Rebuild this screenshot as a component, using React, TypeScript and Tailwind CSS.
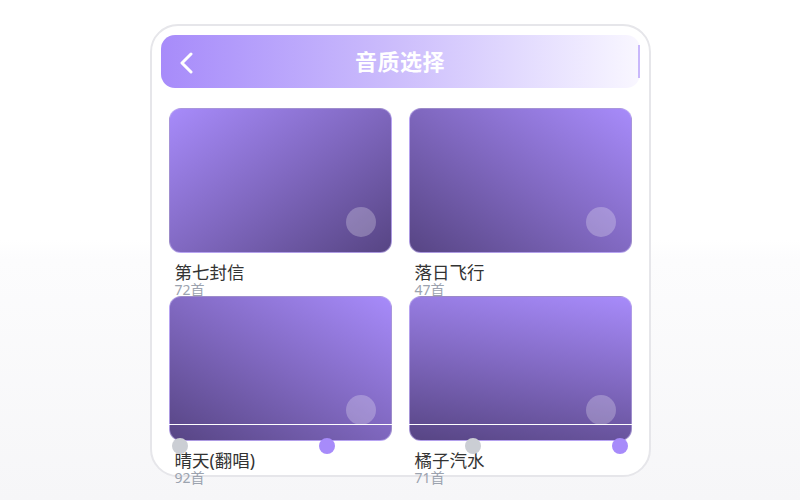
type Album = {
  name: string
  count: string
  bg: string
}

const albums: Album[] = [
  { name: "第七封信", count: "72首", bg: "bg-[linear-gradient(145deg,#a78bfa_0%,#8068c0_50%,#574584_100%)]" },
  { name: "落日飞行", count: "47首", bg: "bg-[linear-gradient(215deg,#a78bfa_0%,#8068c0_50%,#574584_100%)]" },
  { name: "晴天(翻唱)", count: "92首", bg: "bg-[linear-gradient(210deg,#a78bfa_0%,#8068c0_50%,#574584_100%)]" },
  { name: "橘子汽水", count: "71首", bg: "bg-[linear-gradient(190deg,#a78bfa_0%,#8068c0_50%,#574584_100%)]" },
]

export default function App() {
  return (
    <div
      className="min-h-screen w-full pt-[24px] bg-[linear-gradient(to_bottom,#ffffff_0%,#ffffff_48%,#fcfcfd_52%,#f6f6f8_100%)]"
      style={{ fontFamily: '"Noto Sans", "Noto Sans CJK SC", sans-serif' }}
    >
      {/* phone frame */}
      <div className="relative mx-auto w-[501px] h-[453px] rounded-[28px] border-2 border-[#e6e6ea] bg-white p-[9px]">
        {/* header */}
        <div className="relative flex h-[53px] items-center justify-center rounded-[14px] bg-gradient-to-r from-[#a78bfa] via-[#cdbefc] to-[#f9f7ff]">
          <svg className="absolute left-[18px] top-[17px]" width="16" height="22" viewBox="0 0 16 22" fill="none">
            <polyline points="12,2 3,11 12,20" stroke="white" strokeWidth="3" strokeLinecap="round" strokeLinejoin="round" />
          </svg>
          <span className="text-[22px] font-bold text-white tracking-[0.5px]">音质选择</span>
          <div className="absolute right-0 top-[10px] h-[33px] w-[2px] bg-[#c9b8fb]" />
        </div>

        {/* album grid */}
        <div className="mt-[20px] grid grid-cols-2 gap-x-[17px] px-[8px]">
          {albums.map((a) => (
            <div key={a.name} className="h-[188px]">
              <div className={`relative h-[145px] rounded-[12px] border border-[#c7b7f2]/60 ${a.bg}`}>
                <div className="absolute right-[15px] bottom-[15px] h-[30px] w-[30px] rounded-full bg-white/25" />
              </div>
              <div className="mt-[9px] pl-[6px] text-[17.5px] leading-[21px] text-[#333333]">{a.name}</div>
              <div className="pl-[6px] text-[14px] leading-[13px] text-[#9ca3af]">{a.count}</div>
            </div>
          ))}
        </div>

        {/* slider overlay */}
        <div className="absolute left-[10px] top-[398px] h-px w-[476px] bg-white" />
        <div className="absolute left-[20px] top-[412px] h-[16px] w-[16px] rounded-full bg-[#cbced4]" />
        <div className="absolute left-[167px] top-[412px] h-[16px] w-[16px] rounded-full bg-[#a78bfa]" />
        <div className="absolute left-[313px] top-[412px] h-[16px] w-[16px] rounded-full bg-[#cbced4]" />
        <div className="absolute left-[460px] top-[412px] h-[16px] w-[16px] rounded-full bg-[#a78bfa]" />
      </div>
    </div>
  )
}
